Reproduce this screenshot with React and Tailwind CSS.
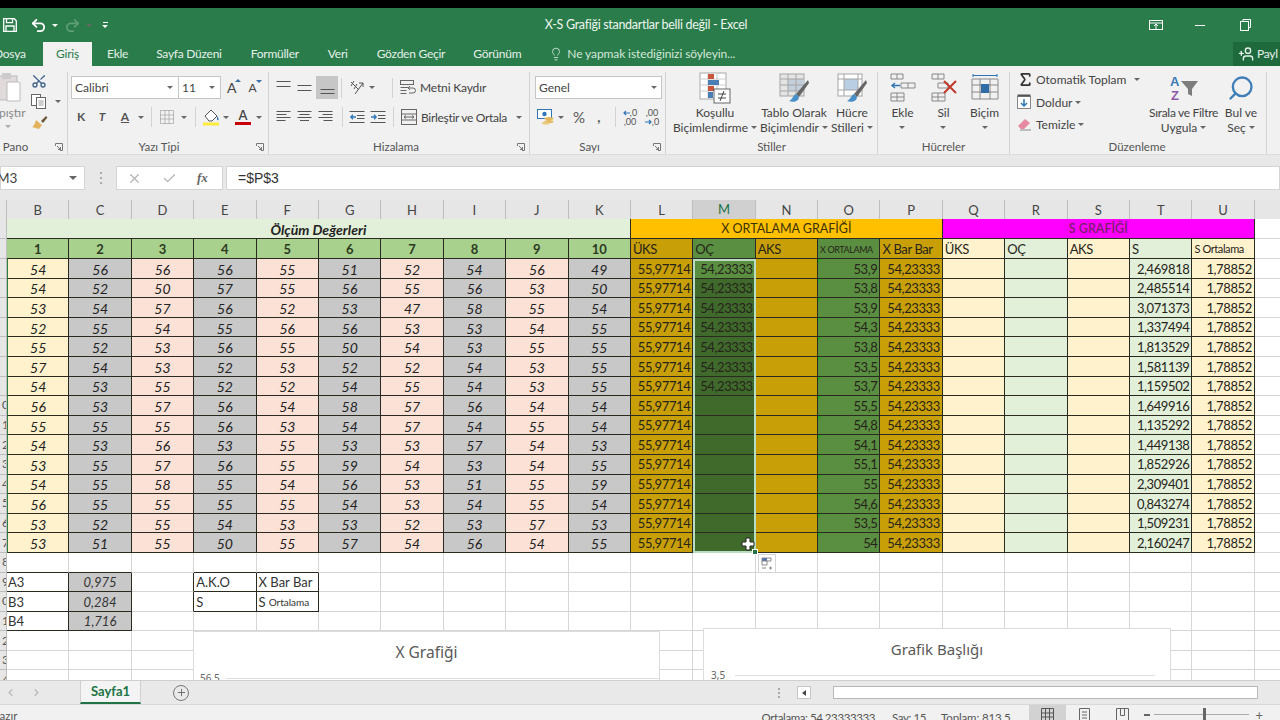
import { Undo2, Redo2, Scissors, Lightbulb, UserPlus, Plus, ChevronLeft, ChevronRight, Search, Sigma, Check, X } from 'lucide-react'

const COLS = ['B', 'C', 'D', 'E', 'F', 'G', 'H', 'I', 'J', 'K', 'L', 'M', 'N', 'O', 'P', 'Q', 'R', 'S', 'T', 'U']

const MEASURES = [
  [54, 56, 56, 56, 55, 51, 52, 54, 56, 49],
  [54, 52, 50, 57, 55, 56, 55, 56, 53, 50],
  [53, 54, 57, 56, 52, 53, 47, 58, 55, 54],
  [52, 55, 54, 55, 56, 56, 53, 53, 54, 55],
  [55, 52, 53, 56, 55, 50, 54, 53, 55, 55],
  [57, 54, 53, 52, 53, 52, 52, 54, 53, 55],
  [54, 53, 55, 52, 52, 54, 55, 54, 53, 55],
  [56, 53, 57, 56, 54, 58, 57, 56, 54, 54],
  [55, 55, 55, 56, 53, 54, 57, 54, 55, 54],
  [54, 53, 56, 53, 55, 53, 53, 57, 54, 53],
  [53, 55, 57, 56, 55, 59, 54, 53, 54, 55],
  [54, 55, 58, 55, 54, 56, 53, 51, 55, 59],
  [56, 55, 55, 55, 55, 54, 53, 54, 55, 54],
  [53, 52, 55, 54, 53, 53, 52, 53, 57, 53],
  [53, 51, 55, 50, 55, 57, 54, 56, 54, 55],
]
const XBAR = ['53,9', '53,8', '53,9', '54,3', '53,8', '53,5', '53,7', '55,5', '54,8', '54,1', '55,1', '55', '54,6', '53,5', '54']
const SDEV = ['2,469818', '2,485514', '3,071373', '1,337494', '1,813529', '1,581139', '1,159502', '1,649916', '1,135292', '1,449138', '1,852926', '2,309401', '0,843274', '1,509231', '2,160247']

const MEASURE_BG = ['bg-[#fff2cc]', 'bg-[#c8c8c8]', 'bg-[#fbe1d6]', 'bg-[#c8c8c8]', 'bg-[#fbe1d6]', 'bg-[#c8c8c8]', 'bg-[#fbe1d6]', 'bg-[#c8c8c8]', 'bg-[#fbe1d6]', 'bg-[#c8c8c8]']

const line = 'border-r border-b border-[#2a2a20]'
const grid = 'border-r border-b border-[#d6d6d6]'

function Caret({ className = '' }) {
  return <span className={`inline-block w-0 h-0 border-x-[3px] border-x-transparent border-t-[3px] border-t-[#666] ${className}`} />
}

function Launcher() {
  return (
    <svg width="8" height="8" viewBox="0 0 8 8" fill="none" stroke="#777" strokeWidth="1">
      <path d="M.5 3V.5H7.5V7.5H5M2 3l3.5 3.5M5.5 4v2.5H3" />
    </svg>
  )
}

function Lines({ rows, x = 'left' }) {
  // small text-alignment glyph
  const w = [14, 10, 14, 9]
  return (
    <svg width="15" height="14" viewBox="0 0 15 14" stroke="#555" strokeWidth="1">
      {rows.map((y, i) => {
        const len = x === 'none' ? 14 : w[i % 4]
        const start = x === 'right' ? 14.5 - len : x === 'center' ? 7.5 - len / 2 : 0.5
        return <path key={y} d={`M${start} ${y + 0.5}h${len}`} />
      })}
    </svg>
  )
}

function IndentIcon({ flip }) {
  return (
    <svg width="16" height="14" viewBox="0 0 16 14" fill="none" stroke="#555">
      <path d="M.5 1.5h15M8 5.5h7.5M8 8.5h7.5M.5 12.5h15" />
      <path d={flip ? 'M1 7h5M4 4.8 6.2 7 4 9.2' : 'M7 7H2M4 4.8 1.8 7 4 9.2'} stroke="#2f75b5" strokeWidth="1.3" />
    </svg>
  )
}

function DecimalIcon({ more }) {
  const arrow = (
    <svg width="7" height="6" viewBox="0 0 7 6" fill="none" stroke="#2f75b5" strokeWidth="1.2">
      <path d={more ? 'M7 3H1M3 1 1 3l2 2' : 'M0 3h6M4 1l2 2-2 2'} />
    </svg>
  )
  return (
    <span className="w-[20px] flex flex-col items-center text-[9px] leading-[9px] text-[#555]">
      {more
        ? <><span className="flex items-center">{arrow},0</span><span>,00</span></>
        : <><span>,00</span><span className="flex items-center">{arrow},0</span></>}
    </span>
  )
}

function SmallLabel({ children, className = '' }) {
  return <span className={`text-[12px] leading-[15px] text-[#444] whitespace-nowrap ${className}`}>{children}</span>
}

function Group({ w, label, launcher, children }) {
  return (
    <div className={`${w} h-full shrink-0 flex flex-col border-r border-[#d2d2d2]`}>
      <div className="flex-1 min-h-0">{children}</div>
      <div className="h-[15px] grid grid-cols-[1fr_auto_1fr] items-center">
        <span />
        <span className="text-[11.5px] leading-[14px] text-[#555] whitespace-nowrap">{label}</span>
        <span className="flex justify-end pr-[4px]">{launcher && <Launcher />}</span>
      </div>
    </div>
  )
}

function BigBtn({ w, icon, top, bottom, caretOnly, tight }) {
  return (
    <div className={`${w} flex flex-col items-center shrink-0`}>
      <div className="h-[32px] flex items-center justify-center">{icon}</div>
      <div className="mt-[1px] flex flex-col items-center">
        <SmallLabel className={tight ? 'tracking-[-0.3px]' : ''}>{top}</SmallLabel>
        {caretOnly ? <Caret className="mt-[6px]" /> : (
          <SmallLabel className="flex items-center gap-[3px]">{bottom}<Caret /></SmallLabel>
        )}
      </div>
    </div>
  )
}

function CondIcon() {
  return (
    <svg width="32" height="32" viewBox="0 0 32 32">
      <rect x="1" y="1" width="26" height="26" fill="#fff" stroke="#aaa" />
      <path d="M1 7h26M1 13h26M1 19h26M9 1v26M18 1v26" stroke="#ccc" />
      <rect x="9" y="2" width="6" height="5" fill="#c8553d" />
      <rect x="9" y="8" width="11" height="5" fill="#4a7fb5" />
      <rect x="9" y="14" width="6" height="5" fill="#c8553d" />
      <rect x="9" y="20" width="5" height="6" fill="#4a7fb5" />
      <rect x="15" y="17" width="16" height="14" fill="#fff" stroke="#666" />
      <path d="M19 22h8M19 26h8M25 19l-4 10" stroke="#444" fill="none" />
    </svg>
  )
}

function TableIcon() {
  return (
    <svg width="32" height="32" viewBox="0 0 32 32">
      <rect x="2" y="2" width="24" height="22" fill="#e4e4e4" stroke="#a5a5a5" />
      <rect x="10" y="7" width="16" height="12" fill="#c4cfdc" />
      <path d="M2 7h24M2 13h24M2 19h24M10 2v22M18 2v22" stroke="#a5a5a5" />
      <path d="M30 8 18 22l3 3L31 11z" fill="#666" />
      <path d="M18 22c-3 1-3 5-7 7 5 2 10 0 10-4z" fill="#4a90c8" />
    </svg>
  )
}

function StyleIcon() {
  return (
    <svg width="32" height="32" viewBox="0 0 32 32">
      <rect x="2" y="2" width="24" height="22" fill="#fff" stroke="#a5a5a5" />
      <rect x="8" y="7" width="14" height="11" fill="#b9cde3" />
      <path d="M2 7h24M8 2v22M22 2v22M2 18h24" stroke="#a5a5a5" />
      <path d="M30 8 18 22l3 3L31 11z" fill="#666" />
      <path d="M18 22c-3 1-3 5-7 7 5 2 10 0 10-4z" fill="#4a90c8" />
    </svg>
  )
}

function CellsBase({ children }) {
  return (
    <svg width="28" height="30" viewBox="0 0 28 30" fill="none" stroke="#888">
      {children}
    </svg>
  )
}

function FillIcon() {
  return (
    <svg width="18" height="18" viewBox="0 0 18 18">
      <path d="M3 8 9 2l6 6-5 5H7z" fill="#fff" stroke="#555" />
      <path d="M15 8c1.5 2 2 3 1.4 4-.5.6-1.4.2-1.4-1z" fill="#2f75b5" />
      <rect x="1" y="14.5" width="16" height="3" fill="#ffeb3b" />
    </svg>
  )
}

function BrushIcon() {
  return (
    <svg width="17" height="15" viewBox="0 0 17 15">
      <path d="M10 6 15 1l1.5 1.5L12 8z" fill="#6b5a3a" />
      <path d="M5 5l6 5-3 4-7-2c2-1 3-4 4-7z" fill="#e2b25c" />
    </svg>
  )
}

function CopyIcon() {
  return (
    <svg width="16" height="15" viewBox="0 0 16 15" fill="#fff" stroke="#666">
      <rect x=".5" y=".5" width="9" height="11" />
      <rect x="5.5" y="3.5" width="9" height="11" />
      <path d="M7.5 7h5M7.5 9h5M7.5 11h5" stroke="#999" />
    </svg>
  )
}

function HomeRibbon() {
  return (
    <div className="h-[89px] bg-[#f1f1f1] flex overflow-hidden pt-[6px] border-b border-[#dcdcdc]">
      <Group w="w-[68px]" label={<span className="block -translate-x-[18px]">Pano</span>} launcher>
        <div className="flex h-full">
          <div className="w-[31px] flex flex-col items-start overflow-hidden">
            <svg className="-ml-[3px]" width="26" height="30" viewBox="0 0 26 30">
              <rect x="0" y="4" width="20" height="24" fill="#e0dada" stroke="#c0bcbc" />
              <rect x="5" y="1" width="9" height="6" fill="#ccc" />
              <path d="M10 10h12l1 1v18H10z" fill="#fff" stroke="#bbb" />
            </svg>
            <SmallLabel className="-ml-[1px] mt-[3px] text-[#888]">pıştır</SmallLabel>
            <Caret className="ml-[5px] mt-[5px] opacity-50" />
          </div>
          <div className="flex flex-col items-start pt-[1px] gap-[6px]">
            <Scissors size={16} className="text-[#41648f] -rotate-90" />
            <div className="flex items-center gap-[8px] -mt-[1px]"><CopyIcon /><Caret /></div>
            <BrushIcon />
          </div>
        </div>
      </Group>

      <Group w="w-[201px]" label={<span className="block -ml-[18px]">Yazı Tipi</span>} launcher>
        <div className="pl-[3px] pt-[4px]">
          <div className="flex items-center h-[23px]">
            <div className="w-[108px] h-full bg-white border border-[#c6c6c6] flex items-center justify-between px-[3px] pr-[5px]">
              <span className="text-[12px] pt-[1px] text-[#444]">Calibri</span><Caret />
            </div>
            <div className="w-[42px] h-full bg-white border border-l-0 border-[#c6c6c6] flex items-center justify-between px-[3px] pr-[5px]">
              <span className="text-[12px] pt-[1px] text-[#444]">11</span><Caret />
            </div>
            <span className="ml-[6px] text-[14px] leading-none text-[#444] relative">A<span className="absolute -top-[2px] -right-[5px] w-0 h-0 border-x-[3px] border-x-transparent border-b-[3px] border-b-[#3a6ea5]" /></span>
            <span className="ml-[12px] text-[12px] leading-none text-[#444] relative">A<span className="absolute -top-[2px] -right-[5px] w-0 h-0 border-x-[3px] border-x-transparent border-t-[3px] border-t-[#3a6ea5]" /></span>
          </div>
          <div className="flex items-center h-[22px] mt-[7px] text-[#555]">
            <span className="ml-[5px] w-[10px] text-[12px] font-bold text-center">K</span>
            <span className="ml-[11px] w-[10px] text-[12px] font-bold italic text-center">T</span>
            <span className="ml-[12px] w-[12px] text-[12px] font-bold underline text-center">A</span>
            <Caret className="ml-[7px]" />
            <span className="ml-[7px] w-px h-[20px] bg-[#d2d2d2]" />
            <svg className="ml-[8px]" width="14" height="14" viewBox="0 0 14 14" stroke="#888" strokeDasharray="1 1" fill="none"><path d="M.5.5h13v13H.5zM.5 5h13M.5 9h13M5 .5v13M9 .5v13" /></svg>
            <Caret className="ml-[7px]" />
            <span className="ml-[8px] w-px h-[20px] bg-[#d2d2d2]" />
            <span className="ml-[6px]"><FillIcon /></span>
            <Caret className="ml-[3px]" />
            <span className="ml-[6px] w-[16px] text-[13px] leading-[13px] text-center font-semibold text-[#444] border-b-[3px] border-[#c8000c]">A</span>
            <Caret className="ml-[5px]" />
          </div>
        </div>
      </Group>

      <Group w="w-[261px]" label={<span className="block -ml-[6px]">Hizalama</span>} launcher>
        <div className="pl-[7px] pt-[4px]">
          <div className="flex items-center h-[23px]">
            <span className="w-[21px] flex justify-start"><Lines x="none" rows={[0, 5]} /></span>
            <span className="w-[19px] flex justify-start"><Lines x="none" rows={[4, 9]} /></span>
            <span className="w-[22px] h-[23px] bg-[#c6c6c6] flex items-end justify-center pb-[3px]"><Lines x="none" rows={[7, 11]} /></span>
            <span className="ml-[3px] w-px h-[20px] bg-[#d2d2d2]" />
            <svg className="ml-[7px]" width="16" height="16" viewBox="0 0 16 16" fill="none" stroke="#555"><path d="M2 2l8 8M5 1l-3 5M8 4l-3 5M14 3 6 14M14 3v4M14 3h-4" /></svg>
            <Caret className="ml-[4px]" />
            <span className="ml-[17px] w-px h-[20px] bg-[#d2d2d2]" />
            <svg className="ml-[7px]" width="16" height="16" viewBox="0 0 16 16" fill="none" stroke="#666"><rect x=".5" y=".5" width="13" height="4" /><path d="M.5 7.5h8M.5 10.5h6M.5 13.5h6M9 13h4a2 2 0 0 0 0-5H8M10 6 8 8l2 2" /></svg>
            <SmallLabel className="ml-[4px] tracking-[-0.15px]">Metni Kaydır</SmallLabel>
          </div>
          <div className="flex items-center h-[22px] mt-[7px]">
            <span className="w-[21px]"><Lines rows={[1, 4, 7, 10]} /></span>
            <span className="w-[21px]"><Lines x="center" rows={[1, 4, 7, 10]} /></span>
            <span className="w-[21px]"><Lines x="right" rows={[1, 4, 7, 10]} /></span>
            <span className="ml-[3px] w-px h-[20px] bg-[#d2d2d2]" />
            <span className="ml-[6px] w-[21px]"><IndentIcon /></span>
            <span className="w-[21px]"><IndentIcon flip /></span>
            <span className="ml-[2px] w-px h-[20px] bg-[#d2d2d2]" />
            <svg className="ml-[7px]" width="16" height="16" viewBox="0 0 16 16" fill="none" stroke="#666"><rect x=".5" y=".5" width="15" height="15" /><path d="M.5 5h15M.5 11h15M3 8h10M3 8l2-1.5M3 8l2 1.5M13 8l-2-1.5M13 8l-2 1.5" /></svg>
            <SmallLabel className="ml-[4px] tracking-[-0.3px]">Birleştir ve Ortala</SmallLabel>
            <Caret className="ml-[9px]" />
          </div>
        </div>
      </Group>

      <Group w="w-[136px]" label={<span className="block -ml-[16px]">Sayı</span>} launcher>
        <div className="pl-[5px] pt-[4px]">
          <div className="w-[127px] h-[23px] bg-white border border-[#c6c6c6] flex items-center justify-between px-[3px] pr-[4px]">
            <span className="text-[12px] pt-[1px] text-[#444]">Genel</span><Caret />
          </div>
          <div className="flex items-center h-[22px] mt-[7px] text-[#555]">
            <svg className="ml-[2px]" width="17" height="16" viewBox="0 0 17 16"><rect x=".5" y=".5" width="14" height="9" fill="#fff" stroke="#2f75b5" /><circle cx="7.5" cy="5" r="2.2" fill="#2f75b5" /><ellipse cx="12" cy="9.5" rx="4.5" ry="1.6" fill="#e3b75c" /><ellipse cx="12" cy="12.5" rx="4.5" ry="1.6" fill="#e3b75c" /><ellipse cx="9" cy="14" rx="4" ry="1.6" fill="#eac87c" /></svg>
            <Caret className="ml-[4px]" />
            <span className="ml-[8px] w-[14px] text-[15px] leading-none text-center">%</span>
            <span className="ml-[9px] w-[8px] text-[14px] font-bold leading-none text-center">,</span>
            <span className="ml-[12px] w-px h-[20px] bg-[#d2d2d2]" />
            <span className="ml-[4px]"><DecimalIcon more /></span>
            <span className="ml-[2px]"><DecimalIcon /></span>
          </div>
        </div>
      </Group>

      <Group w="w-[212px]" label="Stiller">
        <div className="flex pl-[4px]">
          <BigBtn w="w-[90px]" icon={<CondIcon />} top="Koşullu" bottom="Biçimlendirme" />
          <BigBtn w="w-[68px]" icon={<TableIcon />} top="Tablo Olarak" bottom="Biçimlendir" />
          <BigBtn w="w-[48px]" icon={<StyleIcon />} top="Hücre" bottom="Stilleri" />
        </div>
      </Group>

      <Group w="w-[132px]" label="Hücreler">
        <div className="flex pl-[4px]">
          <BigBtn w="w-[41px]" caretOnly top="Ekle" icon={
            <CellsBase><path d="M2 1h12v5H2zM8 1v5M2 20h13v8H2zM2 24h13M8 20v8M12 10h14v5H12zM19 10v5" /><path d="M11 12.5H3M6 10l-3 2.5L6 15" stroke="#2f75b5" strokeWidth="1.4" /></CellsBase>
          } />
          <BigBtn w="w-[41px]" caretOnly top="Sil" icon={
            <CellsBase><path d="M2 1h12v5H2zM8 1v5M2 20h13v8H2zM2 24h13M8 20v8M8 10h10v5H8z" /><path d="M14 8l12 12M26 8 14 20" stroke="#c0392b" strokeWidth="2" /></CellsBase>
          } />
          <BigBtn w="w-[41px]" caretOnly top="Biçim" icon={
            <CellsBase><path d="M1 6h26v20H1zM1 12h26M1 19h26M9 6v20M19 6v20" /><rect x="10" y="11" width="8" height="9" fill="#2f6ea5" stroke="none" /><path d="M2 2.5h24M2 1v3M26 1v3" stroke="#2f75b5" /></CellsBase>
          } />
        </div>
      </Group>

      <Group w="w-[257px]" label={<span className="block -ml-[2px]">Düzenleme</span>}>
        <div className="flex">
          <div className="w-[138px] pl-[7px] flex flex-col -mt-[3px]">
            <div className="flex items-center h-[20px]">
              <Sigma size={17} strokeWidth={2.4} className="text-[#333]" />
              <SmallLabel className="ml-[2px]">Otomatik Toplam</SmallLabel>
              <Caret className="ml-[8px]" />
            </div>
            <div className="flex items-center h-[22px] mt-[2px]">
              <svg width="15" height="16" viewBox="0 0 15 16" fill="none"><rect x=".5" y="2.5" width="13" height="12" stroke="#888" fill="#fff" /><rect x=".5" y=".5" width="13" height="2" fill="#555" /><path d="M7 5v7M4 9l3 3 3-3" stroke="#2f75b5" strokeWidth="1.5" /></svg>
              <SmallLabel className="ml-[4px]">Doldur</SmallLabel>
              <Caret className="ml-[3px]" />
            </div>
            <div className="flex items-center h-[22px]">
              <svg width="15" height="14" viewBox="0 0 15 14"><path d="M1 9 8 2l5 4-6 6H4z" fill="#e58aa0" /><path d="M3 13h11" stroke="#888" /></svg>
              <SmallLabel className="ml-[4px]">Temizle</SmallLabel>
              <Caret className="ml-[3px]" />
            </div>
          </div>
          <BigBtn w="w-[71px]" tight top="Sırala ve Filtre" bottom="Uygula" icon={
            <svg width="30" height="30" viewBox="0 0 30 30">
              <text x="1" y="13" fontSize="13" fontWeight="700" fill="#3d7ab8" fontFamily="'Liberation Sans',sans-serif">A</text>
              <text x="2" y="27" fontSize="13" fontWeight="700" fill="#8e5aa8" fontFamily="'Liberation Sans',sans-serif">Z</text>
              <path d="M12 8h17l-6 8v7l-4-2v-5z" fill="#7d7d7d" />
            </svg>
          } />
          <BigBtn w="w-[44px]" top="Bul ve" bottom="Seç" icon={<Search size={28} strokeWidth={2} className="text-[#3f7fb8] -scale-x-100" />} />
        </div>
      </Group>
      <div className="flex-1" />
    </div>
  )
}

function TitleBar() {
  const tabs = [
    ['Ekle', 'ml-[15px]'],
    ['Sayfa Düzeni', 'ml-[28px]'],
    ['Formüller', 'ml-[29px]'],
    ['Veri', 'ml-[29px]'],
    ['Gözden Geçir', 'ml-[29px]'],
    ['Görünüm', 'ml-[28px]'],
  ]
  return (
    <div className="h-[58px] bg-[#2a7c4a] text-white">
      <div className="h-[34px] flex items-center relative">
        <svg className="ml-[3px]" width="14" height="14" viewBox="0 0 14 14" fill="none" stroke="#fff" strokeWidth="1.3"><path d="M.7.7h10.6l2 2v10.6H.7zM3.5.7v4h6v-4M3 13.300V8h8v5.300" /></svg>
        <Undo2 size={17} strokeWidth={2.6} className="ml-[13px]" />
        <Caret className="ml-[5px] border-t-white" />
        <Redo2 size={17} strokeWidth={2.4} className="ml-[6px] text-[#5f9f78]" />
        <Caret className="ml-[5px] border-t-[#5f9f78]" />
        <span className="ml-[10px] flex flex-col items-center gap-[2px]"><span className="w-[5px] h-px bg-white" /><Caret className="border-t-white" /></span>
        <span className="absolute inset-x-0 text-center pl-[12px] text-[12.5px] tracking-[-0.3px] text-[#eef5f0]">X-S Grafiği standartlar belli değil - Excel</span>
        <div className="ml-auto flex items-center">
          <svg width="14" height="11" viewBox="0 0 14 11" fill="none" stroke="#fff"><rect x=".5" y=".5" width="13" height="9" /><path d="M.5 3h13M7 9V4.5M5 6l2-2 2 2" /></svg>
          <span className="ml-[32px] w-[10px] h-px bg-white" />
          <svg className="ml-[35px]" width="11" height="12" viewBox="0 0 11 12" fill="none" stroke="#fff"><path d="M3 2.5V.5h7.5v8H8.5" /><rect x=".5" y="2.5" width="8" height="9" /></svg>
          <span className="w-[29px]" />
        </div>
      </div>
      <div className="h-[24px] flex items-stretch text-[12px] tracking-[-0.25px] text-[#e6f0ea]">
        <span className="-ml-[6px] w-[49px] flex items-center justify-start">Dosya</span>
        <span className="w-[49px] bg-[#f1f1f1] text-[#2a7c4a] flex items-center justify-center">Giriş</span>
        {tabs.map(([t, m]) => (
          <span key={t} className={`${m} flex items-center whitespace-nowrap`}>{t}</span>
        ))}
        <span className="ml-[28px] flex items-center gap-[4px] whitespace-nowrap tracking-[-0.1px] text-[#d4e6da]">
          <Lightbulb size={14} strokeWidth={1.5} />
          Ne yapmak istediğinizi söyleyin...
        </span>
        <span className="ml-auto w-[47px] bg-[#1f6a3c] flex items-center pl-[5px] gap-[3px] whitespace-nowrap overflow-hidden">
          <UserPlus size={16} className="shrink-0 -scale-x-100" />Payl
        </span>
      </div>
    </div>
  )
}

function FormulaBar() {
  return (
    <div className="h-[45px] bg-[#e8e8e8] pt-[11px] flex items-start">
      <div className="w-[85px] h-[24px] bg-white border border-[#d4d4d4] flex items-center justify-between pr-[7px]">
        <span className="-ml-[4px] text-[13.5px] text-[#444]">M3</span>
        <Caret className="border-x-[4px] border-t-[4px] border-t-[#555]" />
      </div>
      <span className="w-[31px] h-[24px] flex flex-col items-center justify-center gap-[3px]">
        <span className="w-[2px] h-[2px] bg-[#aaa]" /><span className="w-[2px] h-[2px] bg-[#aaa]" /><span className="w-[2px] h-[2px] bg-[#aaa]" />
      </span>
      <div className="w-[107px] h-[24px] bg-white border border-[#d4d4d4] flex items-center text-[#b4b4b4]">
        <X size={15} className="ml-[10px]" />
        <Check size={15} className="ml-[20px]" />
        <span className="ml-[20px] text-[13px] italic font-semibold font-['Liberation_Serif',serif] text-[#666]">fx</span>
      </div>
      <div className="ml-[3px] flex-1 h-[24px] bg-white border border-[#d4d4d4] flex items-center pl-[11px]">
        <span className="text-[14px] font-['Liberation_Sans',sans-serif] text-[#333]">=$P$3</span>
      </div>
    </div>
  )
}

function ColumnHeader() {
  return (
    <div className="h-[19px] grid grid-cols-[7px_repeat(20,62.4px)_1fr] bg-[#e6e6e6] text-[13px] text-[#444] font-['Lato',sans-serif]">
      <div className="border-r border-b border-[#bdbdbd]" />
      {COLS.map((c) => (
        <div key={c} className={c === 'M'
          ? 'flex items-center justify-center bg-[#d0d0d0] text-[#217346] border-r border-b-2 border-r-[#bdbdbd] border-b-[#217346]'
          : 'flex items-center justify-center border-r border-b border-[#bdbdbd]'}>{c}</div>
      ))}
      <div className="border-b border-[#bdbdbd]" />
    </div>
  )
}

function RowNum({ n }) {
  return (
    <div className="bg-[#e6e6e6] border-r border-b border-[#bdbdbd] overflow-hidden flex items-center justify-end text-[12px] text-[#555]">
      {n > 9 && <span className="-mr-[3px]">{n % 10}</span>}
    </div>
  )
}

function Empty({ dark }) {
  return <div className={dark ? 'border-r border-b border-r-[#2a2a20] border-b-[#d6d6d6]' : grid} />
}

function Num({ bg, children, corner, left }) {
  return (
    <div className={`${bg} ${line} relative flex items-center pt-[2px] ${left ? 'justify-start pl-[2px]' : 'justify-end pr-[2px]'} text-[#26241a] tracking-[-0.4px]`}>
      {corner && <span className="absolute top-0 left-0 w-0 h-0 border-t-[4px] border-r-[4px] border-t-[#2ba52b] border-r-transparent" />}
      {children}
    </div>
  )
}

function Sheet() {
  return (
    <div className="flex-1 min-h-0 overflow-hidden relative bg-white font-['Lato',sans-serif] text-[13px]">
      <div className="grid grid-cols-[7px_repeat(20,62.4px)_1fr] grid-rows-[20px_20px] auto-rows-[19.6px]">
        {/* Row 1 */}
        <RowNum n={1} />
        <div className={`col-span-10 bg-[#e2f0d9] font-bold italic text-[14px] pt-[2px] text-[#222] flex items-center justify-center ${line}`}>Ölçüm Değerleri</div>
        <div className={`col-span-5 bg-[#ffc000] text-[#3b3208] text-[12.5px] pt-[2px] flex items-center justify-center ${line}`}>X ORTALAMA GRAFİĞİ</div>
        <div className={`col-span-5 bg-[#ff00ff] text-[#7a1f6e] font-semibold text-[12.5px] pt-[2px] flex items-center justify-center ${line}`}>S GRAFİĞİ</div>
        <div className="border-b border-[#d6d6d6]" />

        {/* Row 2 */}
        <RowNum n={2} />
        {[1, 2, 3, 4, 5, 6, 7, 8, 9, 10].map((n) => (
          <div key={n} className={`bg-[#a9d18e] font-bold text-[#2c3a20] pt-[2px] flex items-center justify-center ${line}`}>{n}</div>
        ))}
        <Num left bg="bg-[#c99f08]">ÜKS</Num>
        <Num left bg="bg-[#5a8e41]">OÇ</Num>
        <Num left bg="bg-[#c99f08]">AKS</Num>
        <Num left bg="bg-[#5a8e41]"><span className="text-[9px]">X ORTALAMA</span></Num>
        <Num left bg="bg-[#c99f08]">X Bar Bar</Num>
        <Num left bg="bg-[#fff2cc]">ÜKS</Num>
        <Num left bg="bg-[#e2efd9]">OÇ</Num>
        <Num left bg="bg-[#fff2cc]">AKS</Num>
        <Num left bg="bg-[#e2efd9]">S</Num>
        <Num left bg="bg-[#fff2cc]"><span className="text-[11px]">S Ortalama</span></Num>
        <div className="border-b border-[#d6d6d6]" />

        {/* Data rows */}
        {MEASURES.map((row, i) => [
          <RowNum key={`n${i}`} n={i + 3} />,
          ...row.map((v, j) => (
            <div key={`${i}-${j}`} className={`${MEASURE_BG[j]} ${line} italic text-[14px] pt-[2px] text-[#222] flex items-center justify-center ${j === 0 ? 'border-l border-l-[#2d7d46]' : ''}`}>{v}</div>
          )),
          <Num key={`l${i}`} bg="bg-[#c99f08]">55,97714</Num>,
          <Num key={`m${i}`} bg={i === 0 ? 'bg-[#5a8e41]' : 'bg-[#3f6a2c]'}>{i < 7 ? '54,23333' : ''}</Num>,
          <Num key={`a${i}`} bg="bg-[#c99f08]" />,
          <Num key={`o${i}`} corner bg="bg-[#5a8e41]">{XBAR[i]}</Num>,
          <Num key={`p${i}`} bg="bg-[#c99f08]">54,23333</Num>,
          <Num key={`q${i}`} bg="bg-[#fff2cc]" />,
          <Num key={`r${i}`} bg="bg-[#e2efd9]" />,
          <Num key={`s${i}`} bg="bg-[#fff2cc]" />,
          <Num key={`t${i}`} bg="bg-[#e2efd9]">{SDEV[i]}</Num>,
          <Num key={`u${i}`} bg="bg-[#fff2cc]">1,78852</Num>,
          <div key={`e${i}`} className="border-b border-[#d6d6d6]" />,
        ])}

        {/* Empty row 18: its lower edge is the top of the two small tables */}
        <RowNum n={18} />
        {COLS.map((c) => (
          <div key={c} className={['B', 'C', 'E', 'F'].includes(c)
            ? 'border-r border-b border-r-[#d6d6d6] border-b-[#2a2a20]'
            : grid} />
        ))}
        <div className="border-b border-[#d6d6d6]" />

        {/* Constants and legend rows */}
        {[['A3', '0,975', 'A.K.O', 'X Bar Bar'], ['B3', '0,284', 'S', 'S Ortalama'], ['B4', '1,716']].map(([name, val, k, v], i) => [
          <RowNum key={`cn${i}`} n={19 + i} />,
          <div key={`c${i}`} className={`${line} pl-[1px] pt-[2px] flex items-center text-[#333]`}>{name}</div>,
          <div key={`d${i}`} className={`${line} bg-[#c8c8c8] italic pt-[2px] flex items-center justify-center text-[#333]`}>{val}</div>,
          <Empty key={`x${i}`} dark={!!k} />,
          k ? <div key={`k${i}`} className={`${line} pl-[2px] pt-[2px] flex items-center text-[#333]`}>{k}</div> : <Empty key={`k${i}`} />,
          v ? <div key={`v${i}`} className={`${line} pl-[2px] pt-[2px] flex items-center text-[#333] whitespace-nowrap`}>{v === 'S Ortalama' ? <>S <span className="ml-[3px] text-[10px]">Ortalama</span></> : v}</div> : <Empty key={`v${i}`} />,
          ...COLS.slice(5).map((c) => <Empty key={`g${i}${c}`} />),
          <div key={`h${i}`} className="border-b border-[#d6d6d6]" />,
        ])}

        {/* Rows under the tables */}
        {[22, 23, 24].map((n) => [
          <RowNum key={n} n={n} />,
          ...COLS.map((c) => <Empty key={`${n}${c}`} />),
          <div key={`${n}e`} className="border-b border-[#d6d6d6]" />,
        ])}
      </div>

      {/* Selection on M3:M17 */}
      <div className="absolute left-[693px] top-[40px] w-[63px] h-[294px] border-2 border-[#b9dcc4] pointer-events-none">
        <span className="absolute -right-[4px] -bottom-[4px] w-[6px] h-[6px] bg-[#217346] border border-white" />
      </div>
      <svg className="absolute left-[741px] top-[318px]" width="14" height="14" viewBox="0 0 14 14">
        <path d="M5 1h4v4h4v4H9v4H5V9H1V5h4z" fill="#fff" stroke="#222" />
      </svg>

      {/* Autofill options */}
      <div className="absolute left-[758px] top-[335px] w-[18px] h-[19px] bg-white border border-[#d4d4d4] flex items-center justify-center">
        <svg width="12" height="13" viewBox="0 0 12 13" fill="none" stroke="#888"><rect x="1" y="1" width="5" height="3" fill="#4a6fb5" stroke="none" /><path d="M1 1h9v3H1zM1 4v4h5V4M1 11h4M8 11h3M9.5 9.5v3" /></svg>
      </div>

      {/* Charts below the tables */}
      <div className="absolute left-[193px] top-[412px] w-[467px] h-[70px] bg-white border border-[#dcdcdc]">
        <p className="mt-[9px] text-center font-['Noto_Sans',sans-serif] text-[15.5px] text-[#595959]">X Grafiği</p>
        <div className="mt-[7px] ml-[6px] flex items-center gap-[6px]">
          <span className="font-['Noto_Sans',sans-serif] text-[10px] text-[#666]">56,5</span>
          <span className="flex-1 h-px bg-[#dedede]" />
        </div>
      </div>
      <div className="absolute left-[703px] top-[409px] w-[468px] h-[70px] bg-white border border-[#dcdcdc]">
        <p className="mt-[9px] text-center font-['Noto_Sans',sans-serif] text-[15px] text-[#595959]">Grafik Başlığı</p>
        <div className="mt-[7px] ml-[7px] mr-[15px] flex items-center gap-[10px]">
          <span className="font-['Noto_Sans',sans-serif] text-[10px] text-[#666]">3,5</span>
          <span className="flex-1 h-px bg-[#dedede]" />
        </div>
      </div>
    </div>
  )
}

function TabBar() {
  return (
    <div className="h-[24px] bg-[#e9e9e9] border-t border-[#cfcfcf] flex items-stretch">
      <div className="w-[80px] flex items-center pl-[5px] gap-[15px] text-[#bbb]">
        <ChevronLeft size={11} strokeWidth={3} />
        <ChevronRight size={11} strokeWidth={3} />
      </div>
      <div className="w-[61px] bg-[#f4f4f4] border-x border-[#d0d0d0] border-b-2 border-b-[#217346] flex items-center justify-center text-[13px] font-bold text-[#217346]">Sayfa1</div>
      <div className="ml-[32px] flex items-center">
        <span className="w-[16px] h-[16px] rounded-full border border-[#777] flex items-center justify-center">
          <Plus size={11} className="text-[#666]" />
        </span>
      </div>
      <div className="ml-[589px] flex items-center flex-col justify-center gap-[2px]">
        <span className="w-[2px] h-[2px] bg-[#aaa]" /><span className="w-[2px] h-[2px] bg-[#aaa]" /><span className="w-[2px] h-[2px] bg-[#aaa]" />
      </div>
      <div className="ml-[17px] w-[14px] my-[5px] bg-white border border-[#c6c6c6] flex items-center justify-center">
        <span className="w-0 h-0 border-y-[3px] border-y-transparent border-r-[4px] border-r-[#444]" />
      </div>
      <div className="w-[22px]" />
      <div className="w-[425px] my-[5px] bg-white border border-[#b8b8b8]" />
    </div>
  )
}

function StatusBar() {
  return (
    <div className="h-[16px] bg-[#f1f1f1] border-t border-[#d8d8d8] flex items-start overflow-hidden text-[11.5px] leading-[15px] text-[#555]">
      <span className="-ml-[9px] pt-[3px]">Hazır</span>
      <span className="ml-auto pt-[5px] whitespace-nowrap tracking-[-0.4px]">Ortalama: 54,23333333</span>
      <span className="ml-[17px] pt-[5px] whitespace-nowrap tracking-[-0.4px]">Say: 15</span>
      <span className="ml-[15px] pt-[5px] whitespace-nowrap tracking-[-0.15px]">Toplam: 813,5</span>
      <span className="ml-[19px] w-[37px] h-[16px] bg-[#d2d2d2] flex justify-center pt-[3px]">
        <svg width="13" height="13" viewBox="0 0 13 13" fill="none" stroke="#555"><path d="M.5.5h12v12H.5zM.5 5h12M.5 9h12M4.5.5v12M8.5.5v12" /></svg>
      </span>
      <span className="w-[37px] flex justify-center pt-[3px]">
        <svg width="11" height="13" viewBox="0 0 11 13" fill="none" stroke="#666"><path d="M.5.5h10v12H.5zM3 4h5M3 7h5M3 10h5" /></svg>
      </span>
      <span className="w-[38px] flex justify-center pt-[3px]">
        <svg width="13" height="13" viewBox="0 0 13 13" fill="none" stroke="#666"><path d="M.5.5h12v12H.5zM4.5.5v7h4v-7" /></svg>
      </span>
      <span className="ml-[3px] mt-[9px] w-[6px] h-[2px] bg-[#666]" />
      <span className="ml-[4px] mt-[9px] w-[95px] h-px bg-[#aaa] relative">
        <span className="absolute left-[49px] -top-[6px] w-[3px] h-[13px] bg-[#666]" />
      </span>
      <span className="ml-[6px] mt-[3px] text-[#666] text-[13px]">+</span>
      <span className="w-[17px]" />
    </div>
  )
}

export default function App() {
  return (
    <div className="w-[1280px] h-[720px] overflow-hidden flex flex-col font-['Lato',sans-serif]">
      <div className="h-[8px] bg-black shrink-0" />
      <TitleBar />
      <HomeRibbon />
      <FormulaBar />
      <ColumnHeader />
      <Sheet />
      <TabBar />
      <StatusBar />
    </div>
  )
}
